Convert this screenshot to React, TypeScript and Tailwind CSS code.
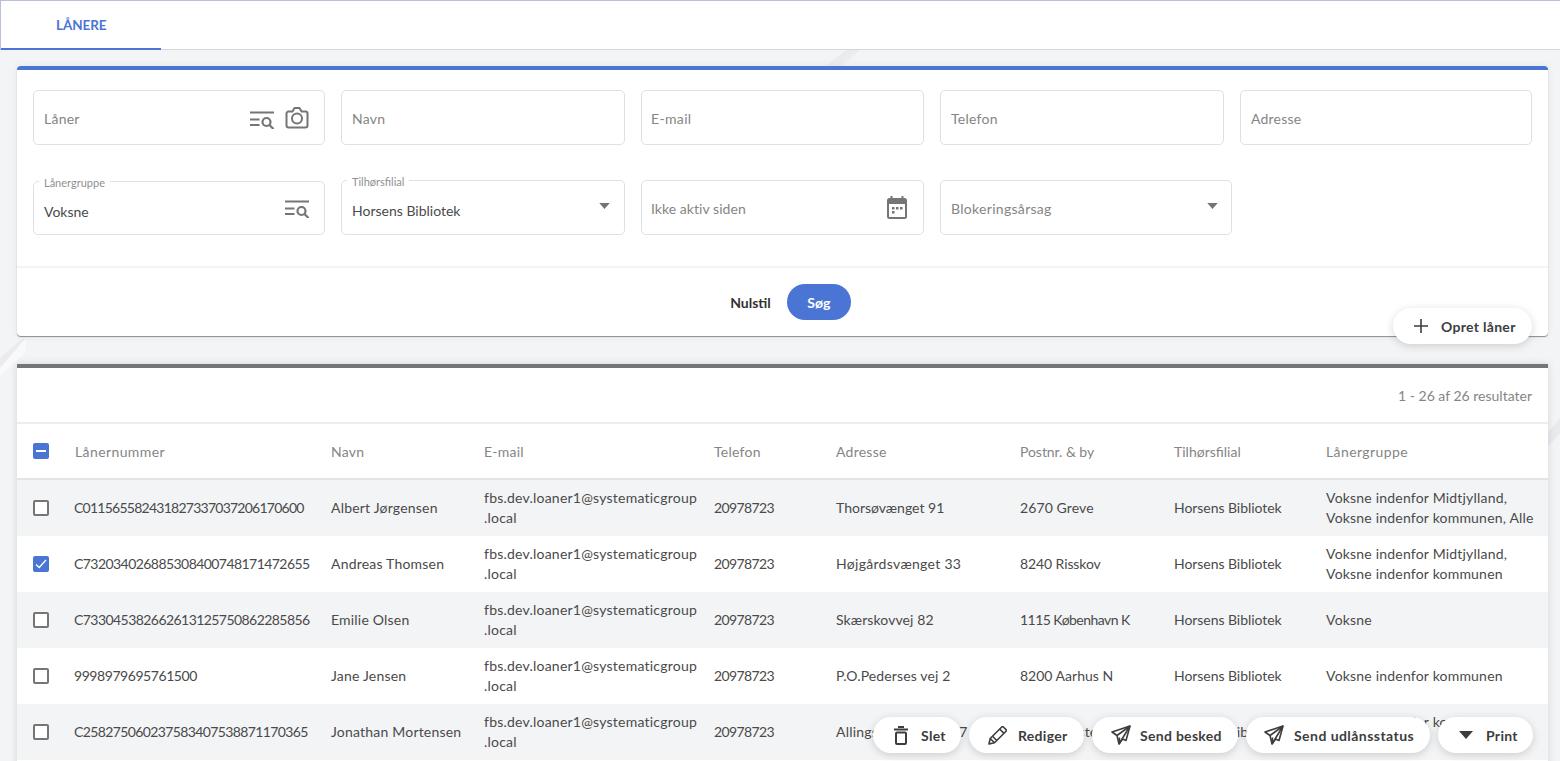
import React from "react";

const ink = "#757575";

function ListSearch() {
  return (
    <svg width="26" height="18" viewBox="0 0 26 18" fill="none" stroke={ink} strokeWidth="2.200">
      <path d="M1 1.500h24M1 8.500h9.500M1 14h9.500" />
      <circle cx="17.500" cy="11" r="4" />
      <path d="M20.500 14l4 4" />
    </svg>
  );
}

function CameraIcon() {
  return (
    <svg width="24" height="22" viewBox="0 0 24 22" fill="none" stroke={ink} strokeWidth="2" strokeLinejoin="round">
      <path d="M3.500 4.500h4l2-3.500h5l2 3.500h4a2 2 0 0 1 2 2v12a2 2 0 0 1-2 2h-17a2 2 0 0 1-2-2v-12a2 2 0 0 1 2-2z" />
      <circle cx="12" cy="11.500" r="5" />
    </svg>
  );
}

function CalendarIcon() {
  return (
    <svg width="20" height="23" viewBox="0 0 20 23" fill="none">
      <path d="M4.500 0v3M15.500 0v3" stroke={ink} strokeWidth="2" />
      <rect x="1" y="3" width="18" height="19" rx="1.500" stroke={ink} strokeWidth="2" />
      <path d="M1 4h18v4H1z" fill={ink} />
      <path d="M5 11h2.500v2.500H5zM9 11h2.500v2.500H9zM13 11h2.500v2.500H13zM5 15h2.500v2.500H5z" fill={ink} />
    </svg>
  );
}

function Caret({ className = "" }: { className?: string }) {
  return (
    <svg width="14" height="8" viewBox="0 0 14 8" className={className}>
      <path d="M0 0h14L7 8z" fill="currentColor" />
    </svg>
  );
}

function Trash() {
  return (
    <svg width="14" height="19" viewBox="0 0 14 19" fill="none" stroke="#3d3d3d" strokeWidth="2">
      <path d="M0 3.500h14M4 1h6" />
      <rect x="2" y="6.500" width="10" height="11.500" rx="1" />
    </svg>
  );
}

function Pencil() {
  return (
    <svg width="19" height="19" viewBox="0 0 19 19" fill="none" stroke="#3d3d3d" strokeWidth="1.600" strokeLinejoin="round">
      <path d="M1 18l1.200-5.500L13.500 1.200a1.500 1.500 0 0 1 2.100 0l2.200 2.200a1.500 1.500 0 0 1 0 2.100L6.500 16.800z" />
      <path d="M2.200 12.500l4.300 4.300M4.500 10.200l4.300 4.300M11.600 3l4.400 4.400" />
    </svg>
  );
}

function Plane() {
  return (
    <svg width="20" height="20" viewBox="0 0 20 20" fill="none" stroke="#3d3d3d" strokeWidth="1.600" strokeLinejoin="round">
      <path d="M19 1L1 7l5 3.500L8 19l3.500-5 3.500 1.500z" />
      <path d="M19 1L6 10.500M19 1L8 19M8 19l.5-6.500" />
    </svg>
  );
}

function Field({ label, className, tracking, children }: { label: string; className: string; tracking: string; children?: React.ReactNode }) {
  return (
    <div className={`flex h-[55px] items-center justify-between rounded-[5px] border border-[#e0e0e0] ${className}`}>
      <span className={`pt-[2px] text-[14px] text-[#858585] ${tracking}`}>{label}</span>
      {children}
    </div>
  );
}

function FloatField({ label, value, className, children }: { label: string; value: string; className: string; children?: React.ReactNode }) {
  return (
    <div className={`relative flex items-center justify-between rounded-[5px] border border-[#e0e0e0] pl-[10px] ${className}`}>
      <span className="absolute left-[5px] top-[-5px] bg-white px-[5px] text-[11px] leading-[12px] text-[#909090]">{label}</span>
      <span className="pt-[6px] text-[14px] text-[#4a4a4a]">{value}</span>
      {children}
    </div>
  );
}

function Box({ state }: { state: "off" | "on" | "mixed" }) {
  if (state === "off") {
    return <span className="block h-4 w-4 rounded-[2px] border-2 border-[#757575] bg-white" />;
  }
  return (
    <span className="flex h-4 w-4 items-center justify-center rounded-[2px] bg-[#4a75d4]">
      {state === "on" ? (
        <svg width="12" height="10" viewBox="0 0 12 10" fill="none" stroke="#fff" strokeWidth="1.300">
          <path d="M1 5.500l3.200 3L11 1" />
        </svg>
      ) : (
        <span className="h-[2px] w-[10px] bg-white" />
      )}
    </span>
  );
}

const email = ["fbs.dev.loaner1@systematicgroup", ".local"];

const rows = [
  { no: "C011565582431827337037206170600", noT: "tracking-[-0.75px]", name: "Albert Jørgensen", addr: "Thorsøvænget 91", addrT: "tracking-[0px]", post: "2670 Greve", postT: "tracking-[0.1px]", group: ["Voksne indenfor Midtjylland,", "Voksne indenfor kommunen, Alle"], state: "off" as const },
  { no: "C732034026885308400748171472655", noT: "tracking-[-0.56px]", name: "Andreas Thomsen", addr: "Højgårdsvænget 33", addrT: "tracking-[0.3px]", post: "8240 Risskov", postT: "tracking-[-0.1px]", group: ["Voksne indenfor Midtjylland,", "Voksne indenfor kommunen"], state: "on" as const },
  { no: "C733045382662613125750862285856", noT: "tracking-[-0.56px]", name: "Emilie Olsen", addr: "Skærskovvej 82", addrT: "tracking-[0.1px]", post: "1115 København K", postT: "tracking-[-0.55px]", group: ["Voksne"], state: "off" as const },
  { no: "9998979695761500", noT: "tracking-[-0.44px]", name: "Jane Jensen", addr: "P.O.Pederses vej 2", addrT: "tracking-[0.13px]", post: "8200 Aarhus N", postT: "tracking-[0px]", group: ["Voksne indenfor kommunen"], state: "off" as const },
  { no: "C258275060237583407538871170365", noT: "tracking-[-0.62px]", name: "Jonathan Mortensen", addr: "Allingskovvænget 57", addrT: "tracking-[0.2px]", post: "7500 Holstebro", postT: "tracking-[0.1px]", group: ["Voksne indenfor kommunen,", "Alle"], state: "off" as const },
];

const cols = "grid grid-cols-[57px_257px_153px_230px_122px_184px_153px_153px_1fr] items-center";
const heads = [
  { t: "Lånernummer", c: "pl-px tracking-[0.4px]" },
  { t: "Navn", c: "tracking-[0.25px]" },
  { t: "E-mail", c: "tracking-[0.25px]" },
  { t: "Telefon", c: "tracking-[0.25px]" },
  { t: "Adresse", c: "tracking-[0.25px]" },
  { t: "Postnr. & by", c: "tracking-[-0.05px]" },
  { t: "Tilhørsfilial", c: "pl-px tracking-[0px]" },
  { t: "Lånergruppe", c: "tracking-[0.4px]" },
];

function Pill({ className, children }: { className: string; children: React.ReactNode }) {
  return (
    <button className={`flex h-9 items-center rounded-full bg-white text-[14px] font-bold text-[#3d3d3d] shadow-[0_2px_8px_rgba(0,0,0,0.16)] ${className}`}>
      {children}
    </button>
  );
}

export default function App() {
  return (
    <div className="relative h-[761px] overflow-hidden bg-[#f3f4f6] font-['Lato',sans-serif] text-[14px] text-[#4a4a4a]">
      <svg className="absolute left-0 top-0" width="1560" height="761" viewBox="0 0 1560 761">
        <defs>
          <linearGradient id="stripeA" x1="0" y1="0" x2="1" y2="1">
            <stop offset="0" stopColor="#e2e4e6" />
            <stop offset="1" stopColor="#f3f4f6" />
          </linearGradient>
        </defs>
        <path d="M846 50h14l-18 16h-16z" fill="url(#stripeA)" />
        <path d="M0 368l26-30h-3L0 358z" fill="#eaebee" />
        <path d="M26 338l-26 30v8l26-24z" fill="#f9f9fa" />
        <path d="M1560 418l-12 14v14l12-12z" fill="#e9eaed" />
      </svg>

      <header className="relative border-l border-t border-l-[#b9c1d3] border-t-[#b9c1d3] bg-white">
        <div className="flex h-[49px] border-b border-[#d5d7da]">
          <div className="flex h-[49px] w-[160px] items-center border-b-2 border-[#4a75d4] pl-[55px] pt-[2px] text-[13.500px] font-bold tracking-[-0.1px] text-[#4a75d4]">
            LÅNERE
          </div>
        </div>
      </header>

      <main className="relative flex flex-col gap-[28px] pl-[17px] pr-[12px] pt-[16px]">
        <section className="relative rounded-[4px] border-t-4 border-[#4a75d4] bg-white shadow-[0_1px_1px_#8c8c8c,0_0_8px_rgba(0,0,0,0.06)]">
          <div className="flex flex-col gap-[35px] px-[16px] pt-[20px]">
            <div className="flex gap-[16px]">
              <Field label="Låner" tracking="tracking-[0.25px]" className="w-[292px] pl-[10px] pr-[15px]">
                <div className="flex items-center gap-[10px]">
                  <span className="mt-[4px]"><ListSearch /></span>
                  <CameraIcon />
                </div>
              </Field>
              <Field label="Navn" tracking="tracking-[0.25px]" className="w-[284px] pl-[10px]" />
              <Field label="E-mail" tracking="tracking-[0.35px]" className="w-[283px] pl-[9px]" />
              <Field label="Telefon" tracking="tracking-[0.25px]" className="w-[284px] pl-[10px]" />
              <Field label="Adresse" tracking="tracking-[0.2px]" className="w-[292px] pl-[10px]" />
            </div>
            <div className="flex gap-[16px]">
              <FloatField label="Lånergruppe" value="Voksne" className="mt-[1px] h-[54px] w-[292px] pr-[14px]">
                <span className="mt-[2px]"><ListSearch /></span>
              </FloatField>
              <FloatField label="Tilhørsfilial" value="Horsens Bibliotek" className="h-[55px] w-[284px] pr-[14px]">
                <span className="mb-[3px] text-[#757575]"><Caret className="h-[6px] w-[11px]" /></span>
              </FloatField>
              <Field label="Ikke aktiv siden" tracking="tracking-[0.05px]" className="w-[283px] pl-[9px] pr-[16px]">
                <span className="mb-[1px]"><CalendarIcon /></span>
              </Field>
              <Field label="Blokeringsårsag" tracking="tracking-[0.3px]" className="w-[292px] pl-[10px] pr-[13px]">
                <span className="mb-[3px] text-[#757575]"><Caret className="h-[6px] w-[11px]" /></span>
              </Field>
            </div>
          </div>
          <div className="mt-[31px] flex h-[70px] items-center justify-center border-t-2 border-[#f3f4f6]">
            <button className="px-4 text-[14px] font-bold text-[#333]">Nulstil</button>
            <button className="h-9 w-16 rounded-full bg-[#4a75d4] text-[14px] font-bold text-white">Søg</button>
          </div>
          <div className="absolute right-[16px] top-[238px]">
            <Pill className="w-[139px] pl-[21px] tracking-[0.3px]">
              <svg width="14" height="14" viewBox="0 0 14 14" stroke="#3d3d3d" strokeWidth="1.600">
                <path d="M7 0v14M0 7h14" />
              </svg>
              <span className="ml-[13px]">Opret låner</span>
            </Pill>
          </div>
        </section>

        <section className="border-t-4 border-[#757575] bg-white shadow-[0_0_8px_rgba(0,0,0,0.12)]">
          <div className="flex h-[56px] items-center justify-end border-b-2 border-[#eceded] pr-[16px] text-[14px] text-[#858585]">
            1 - 26 af 26 resultater
          </div>
          <div className={`${cols} h-[56px] border-b-2 border-[#e3e4e6] text-[#858585]`}>
            <span className="pl-[16px]"><Box state="mixed" /></span>
            {heads.map((h) => (
              <span key={h.t} className={h.c}>{h.t}</span>
            ))}
          </div>
          {rows.map((r, i) => (
            <div key={r.no} className={`${cols} h-[56px] leading-[20px] ${i % 2 === 0 ? "bg-[#f3f4f6]" : "bg-white"}`}>
              <span className="pl-[16px]"><Box state={r.state} /></span>
              <span className={r.noT}>{r.no}</span>
              <span className="tracking-[0.2px]">{r.name}</span>
              <span className="tracking-[0.22px]">
                {email[0]}
                <br />
                {email[1]}
              </span>
              <span className="tracking-[-0.62px]">20978723</span>
              <span className={r.addrT}>{r.addr}</span>
              <span className={r.postT}>{r.post}</span>
              <span className="pl-px tracking-[-0.05px]">Horsens Bibliotek</span>
              <span className="tracking-[0.2px]">
                {r.group.map((g) => (
                  <span key={g} className="block whitespace-nowrap">{g}</span>
                ))}
              </span>
            </div>
          ))}
          <div className="h-[56px] bg-white" />
        </section>
      </main>

      <div className="absolute bottom-[8px] right-[27px] flex gap-[8px] tracking-[0.3px]">
        <Pill className="w-[88px] pl-[21px]"><Trash /><span className="ml-[13px]">Slet</span></Pill>
        <Pill className="w-[115px] pl-[19px]"><Pencil /><span className="ml-[11px]">Rediger</span></Pill>
        <Pill className="w-[146px] pl-[19px]"><Plane /><span className="ml-[9px]">Send besked</span></Pill>
        <Pill className="w-[184px] pl-[18px]"><Plane /><span className="ml-[10px] tracking-[0.45px]">Send udlånsstatus</span></Pill>
        <Pill className="w-[95px] pl-[21px]"><Caret className="text-[#3d3d3d]" /><span className="ml-[13px]">Print</span></Pill>
      </div>
    </div>
  );
}
